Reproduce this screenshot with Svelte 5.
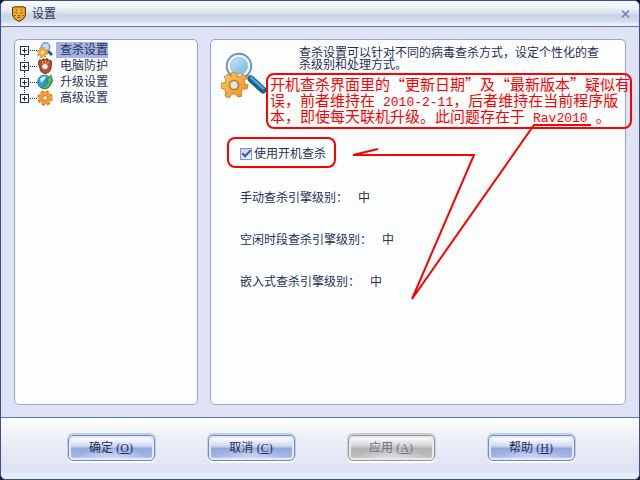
<script>
    let enabled = true;
    let selected = 'scan';

    const items = [
        { id: 'scan', label: '查杀设置' },
        { id: 'guard', label: '电脑防护' },
        { id: 'update', label: '升级设置' },
        { id: 'advanced', label: '高级设置' }
    ];

    const levels = [
        { name: '手动查杀引擎级别：', value: '中' },
        { name: '空闲时段查杀引擎级别：', value: '中' },
        { name: '嵌入式查杀引擎级别：', value: '中' }
    ];

    const buttons = [
        { label: '确定', key: 'O' },
        { label: '取消', key: 'C' },
        { label: '应用', key: 'A', disabled: true },
        { label: '帮助', key: 'H' }
    ];
</script>

<svelte:head>
    <title>设置</title>
</svelte:head>

<div class="window" lang="zh-CN">
    <header>
        <svg class="shield" viewBox="0 0 14 16" aria-hidden="true">
            <path d="M.5 1.5 Q4 0 7 1 Q10 0 13.5 1.5 V9 Q13 13 7 15.5 Q1 13 .5 9Z" fill="#e9a21c" stroke="#5b3413" />
            <path d="M2 3 L5 4 7 2.5 9 4 12 3 11.5 9 9.5 12.5 7 14 4.5 12.5 2.5 9Z" fill="#f5b52c" />
            <path d="M3 6 L6 7.5 M11 6 L8 7.5 M4 3.5 L5 5 M10 3.5 L9 5 M5 11.5 H9 M2 9 L4 10 M12 9 L10 10" stroke="#8a4e10" fill="none" />
            <path d="M5.5 9 H8.5 L7 10.5Z" fill="#5b3413" />
        </svg>
        <h1>设置</h1>
        <button class="close" aria-label="关闭">
            <svg viewBox="0 0 9 8" aria-hidden="true">
                <path d="M1 .5 L8 7.5 M8 .5 L1 7.5" stroke="#6c86ad" stroke-width="1.6" />
            </svg>
        </button>
    </header>

    <div class="body">
        <nav class="panel">
            <ul>
                {#each items as item}
                    <li>
                        <button class="toggle" aria-label="展开 {item.label}"></button>
                        <svg class="icon" viewBox="0 0 16 16" aria-hidden="true">
                            {#if item.id === 'scan'}
                                <path d="M11 9 L15 13" stroke="#1c5f96" stroke-width="3" />
                                <circle cx="8.5" cy="5" r="4.2" fill="#b9e0f4" stroke="#8198c4" stroke-width="1.5" />
                                <circle cx="5.5" cy="10.5" r="4.6" fill="none" stroke="#e08a1e" stroke-width="2" stroke-dasharray="2.1 1.5" />
                                <circle cx="5.5" cy="10.5" r="2.8" fill="#fff" stroke="#f5a93a" stroke-width="2.8" />
                            {:else if item.id === 'guard'}
                                <path d="M2 3 Q2 1 4 2 L5 3 Q5 0 7 1 L8 2 Q9 0 11 1 L11 3 Q14 1 14.5 4 L14 10 Q13 15 8 15.5 Q3 14.5 3 10 L1.5 6Z" fill="#b65136" stroke="#78301e" />
                                <path d="M5 2.5 L6 6 M8.5 2 V5 M11.5 3 L10.5 6" stroke="#e79a78" />
                                <circle cx="8" cy="8.5" r="2.6" fill="#fff" stroke="#e5b6a0" />
                            {:else if item.id === 'update'}
                                <circle cx="7.5" cy="8" r="6.8" fill="#2d9bd8" stroke="#2376ad" />
                                <path d="M3 5 Q6 1 9 3 L7 6 4 9Z" fill="#d5f0fb" />
                                <path d="M5 12 Q11 12 11 7 L9 7 L14 1 L16 8 L14 7.5 Q14 15 6 14.5Z" fill="#5dbb50" stroke="#24823a" stroke-width=".8" />
                            {:else}
                                <circle cx="8" cy="8" r="6.5" fill="none" stroke="#df771c" stroke-width="2.4" stroke-dasharray="3 2.1" />
                                <circle cx="8" cy="8" r="4.2" fill="#fff" stroke="#f49b35" stroke-width="4" />
                                <circle cx="8" cy="8" r="2.2" fill="none" stroke="#c76114" stroke-width=".8" />
                            {/if}
                        </svg>
                        <button class="name" class:selected={selected === item.id} on:click={() => (selected = item.id)}>{item.label}</button>
                    </li>
                {/each}
            </ul>
        </nav>

        <main class="panel">
            <div class="intro">
                <svg viewBox="0 0 48 48" aria-hidden="true">
                    <defs>
                        <linearGradient id="glass" x2="1" y2="1">
                            <stop offset="0" stop-color="#d9f3fd" />
                            <stop offset="1" stop-color="#5fa9d6" />
                        </linearGradient>
                        <linearGradient id="gold" x2="1" y2="1">
                            <stop offset="0" stop-color="#ffcb70" />
                            <stop offset="1" stop-color="#ea8c1c" />
                        </linearGradient>
                    </defs>
                    <path d="M26 24 L31 29" stroke="#9aa9b8" stroke-width="4" />
                    <path d="M30 28 L42 39" stroke="#1d5f8c" stroke-width="7" stroke-linecap="round" />
                    <path d="M30 26.5 L42 37.5" stroke="#4fa6cf" stroke-width="2.5" stroke-linecap="round" />
                    <circle cx="18" cy="15" r="12" fill="url(#glass)" stroke="#6a90bd" stroke-width="2.4" />
                    <circle cx="18" cy="15" r="10" fill="none" stroke="#e9f4fc" stroke-width="2.6" />
                    <circle cx="18" cy="15" r="8.4" fill="none" stroke="#8db9da" stroke-width=".8" />
                    <g fill="url(#gold)" stroke="#d08428" stroke-width="1" stroke-linejoin="round">
                        <path d="M10 22 L15 21 16 25 19 26 22 23 26 27 23 30 24 33 27 34 26 38 22 38 20 41 21 45 17 46 14 43 11 43 8 47 4 45 5 41 3 38 0 37 0 32 4 32 5 29 3 26 7 23 10 26Z" />
                        <circle cx="13" cy="34" r="4.5" fill="#d4e9f4" stroke="#bd7626" stroke-width="1.6" />
                    </g>
                </svg>
                <p>查杀设置可以针对不同的病毒查杀方式，设定个性化的查杀级别和处理方式。</p>
            </div>

            <div class="options">
                <label><input type="checkbox" bind:checked={enabled} />使用开机查杀</label>
                {#each levels as level}
                    <div class="level"><span>{level.name}</span><span>{level.value}</span></div>
                {/each}
            </div>

            <aside class="note">
                <div>开机查杀界面里的“更新日期”及“最新版本”疑似有</div>
                <div>误，前者维持在<span>2010-2-11</span>，后者维持在当前程序版</div>
                <div>本，即使每天联机升级。此问题存在于<span class="product">Rav2010</span>。</div>
            </aside>
            <svg class="marks" viewBox="0 0 416 364" aria-hidden="true">
                <rect x="17" y="98" width="107" height="29" rx="7" />
                <path d="M142 115 H263 L201 259 L323 85 H380 M142 115 L167 109" />
            </svg>
        </main>
    </div>

    <footer>
        {#each buttons as button}
            <button class="action" disabled={button.disabled}>{button.label} <span>(<u>{button.key}</u>)</span></button>
        {/each}
    </footer>
</div>

<style>
    :global(body) {
        background: #10142e;
    }

    .window {
        box-sizing: border-box;
        display: flex;
        flex-direction: column;
        min-height: 100vh;
        border: 1px solid #394f98;
        border-radius: 6px;
        overflow: hidden;
        background: #dfe3f3;
        color: #1f2f56;
        font: 12px/16px "Liberation Sans", "Noto Sans CJK SC", sans-serif;
    }

    button {
        font: inherit;
        color: inherit;
        padding: 0;
        border: 0;
        background: none;
    }

    header {
        display: flex;
        align-items: center;
        gap: 6px;
        height: 25px;
        padding: 0 9px 0 11px;
        border-bottom: 1px solid #5b77c4;
        background: linear-gradient(#fbfcfe 0, #e9eef6 35%, #c6d2e3 60%, #d3dceb 80%, #f4f7fc 100%);
    }

    .shield {
        width: 14px;
        height: 16px;
    }

    h1 {
        flex: 1;
        margin: 0;
        font-size: 12px;
        font-weight: 400;
    }

    .close {
        display: flex;
    }

    .close svg {
        width: 9px;
        height: 8px;
    }

    .body {
        flex: 1;
        display: flex;
        gap: 12px;
        padding: 12px 13px;
    }

    .panel {
        box-sizing: border-box;
        border: 1px solid #8ea5dc;
        border-radius: 5px;
        background: #fcfefd;
    }

    nav {
        flex: none;
        width: 184px;
    }

    ul {
        list-style: none;
        margin: 0;
        padding: 2px 5px;
    }

    li {
        position: relative;
        display: flex;
        align-items: center;
        height: 16px;
    }

    li:not(:last-child)::before {
        content: "";
        position: absolute;
        left: 4px;
        top: 13px;
        height: 6px;
        border-left: 1px dotted #1f2f56;
    }

    .toggle {
        box-sizing: border-box;
        width: 9px;
        height: 9px;
        border: 1px solid #1f2f56;
        background:
            linear-gradient(#1f2f56, #1f2f56) center / 5px 1px no-repeat,
            linear-gradient(#1f2f56, #1f2f56) center / 1px 5px no-repeat;
    }

    .toggle::after {
        content: "";
        position: absolute;
        left: 10px;
        top: 8px;
        width: 7px;
        border-top: 1px dotted #1f2f56;
    }

    .icon {
        width: 16px;
        height: 16px;
        margin: 0 3px 0 8px;
    }

    .name {
        padding: 0 0 0 4px;
    }

    .name.selected {
        background: #a5b4e3;
    }

    main {
        position: relative;
        flex: 1;
        min-width: 0;
    }

    .intro {
        display: flex;
        gap: 30px;
        padding: 7px 20px 0 10px;
    }

    .intro svg {
        flex: none;
        width: 48px;
        height: 48px;
        margin-top: 4px;
    }

    .intro p {
        max-width: 304px;
        margin: 0;
        line-height: 12px;
    }

    .options {
        display: flex;
        flex-direction: column;
        gap: 26px;
        padding: 47px 29px 0;
    }

    label {
        display: flex;
        align-items: center;
        gap: 2px;
        margin-bottom: 2px;
    }

    input {
        appearance: none;
        width: 12px;
        height: 12px;
        margin: 0;
        border: 1px solid #7d97d2;
        background: linear-gradient(135deg, #c3cfef, #f1f4fc);
        box-sizing: border-box;
    }

    input:checked::before {
        content: "";
        display: block;
        width: 9px;
        height: 5px;
        margin: 1px 0 0 1px;
        border: solid #3856a5;
        border-width: 0 0 2px 2px;
        transform: rotate(-45deg);
        box-sizing: border-box;
    }

    .level {
        display: flex;
        gap: 10px;
    }

    .note {
        position: absolute;
        left: 55px;
        top: 33px;
        box-sizing: border-box;
        width: 366px;
        padding: 1px 2px 3px;
        border: 2px solid #f00;
        border-radius: 8px;
        color: #f00;
        font: 15px/16px "Noto Sans CJK SC", sans-serif;
        white-space: nowrap;
    }

    .note div {
        height: 16px;
    }

    .note span {
        padding-left: 8px;
        font: 13px/13px "Liberation Mono", monospace;
    }

    .note .product {
        padding-right: 8px;
    }

    .marks {
        position: absolute;
        left: 0;
        top: 0;
        width: 416px;
        height: 364px;
        fill: none;
        stroke: #f00;
        stroke-width: 2;
        pointer-events: none;
    }

    footer {
        display: flex;
        justify-content: center;
        gap: 53px;
        padding: 17px 0 12px 2px;
        border-top: 1px solid #5b77c4;
        border-bottom: 6px solid #e6ecf9;
        background: linear-gradient(#fdfefe, #eef0f7 35%, #dde1f3);
    }

    .action {
        box-sizing: border-box;
        width: 87px;
        height: 26px;
        border: 1px solid #6f89cd;
        border-radius: 5px;
        background:
            radial-gradient(ellipse 34px 14px at 50% 100%, #d5def8, transparent),
            linear-gradient(#fbfcff 10%, #cdd7f0 42%, #94a8de 52%, #a5b5e4 85%, #d9e1f7);
        box-shadow: inset 0 0 0 2px #e3e9fa, 0 -1px 0 1px #c4d0e4, 0 1px 0 1px #fbfcff;
    }

    .action span {
        font: 12px/12px "Liberation Serif", serif;
    }

    .action:disabled {
        border-color: #989898;
        color: #69728d;
        background:
            radial-gradient(ellipse 34px 14px at 50% 100%, #e4e4e4, transparent),
            linear-gradient(#f8f8f8 10%, #d3d3d3 42%, #b2b2b2 52%, #bcbcbc 85%, #dedede);
        box-shadow: inset 0 0 0 2px #e8e8e8, 0 -1px 0 1px #cbcdd0, 0 1px 0 1px #fbfcff;
    }
</style>
